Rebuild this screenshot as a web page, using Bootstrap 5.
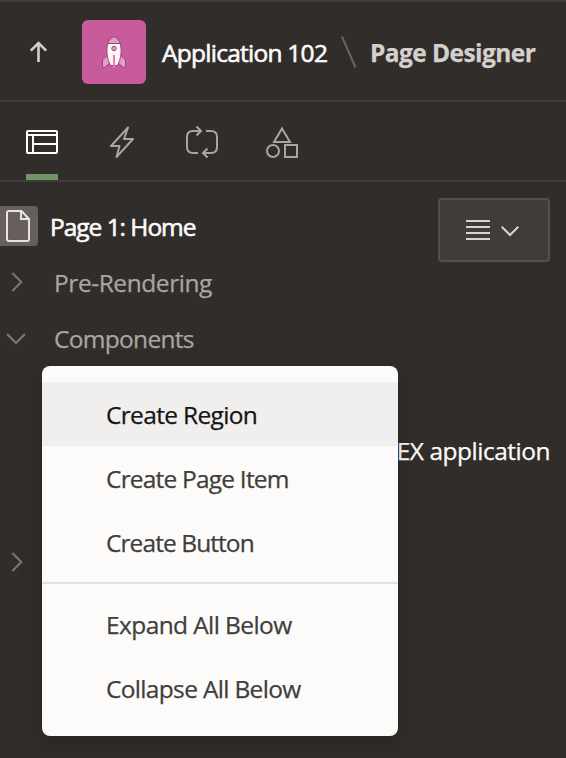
<!DOCTYPE html>
<html lang="en">
<head>
<meta charset="utf-8">
<meta name="viewport" content="width=device-width, initial-scale=1">
<title>Page Designer</title>
<link href="https://cdn.jsdelivr.net/npm/bootstrap@5.3.0/dist/css/bootstrap.min.css" rel="stylesheet">
<style>
body{background:#312d2a;color:#fcfbfa;font-family:"Open Sans","Noto Sans",sans-serif;font-size:24.5px;line-height:32px;height:758px;overflow:hidden;letter-spacing:-.7px;white-space:nowrap;-webkit-text-stroke:.25px currentColor}
svg{display:block;fill:none;flex:none}
.topbar{height:102px;border-top:2px solid #403c38;border-bottom:2px solid #403c38;padding:2px 0 0 22px}
.app-logo{width:64px;height:64px;background:#c75b9b;border-radius:6px;margin-left:28px;margin-right:16px}
.app-name{width:177px;padding-top:2px;letter-spacing:-.74px;-webkit-text-stroke-width:.6px}
.page-name{color:#d4d0cd;font-weight:700;margin-left:13px;padding-top:2px;letter-spacing:-.57px}
.tabs{height:80px;border-bottom:2px solid #403c38;padding-left:26px;gap:48px}
.tabs .nav-link{width:32px;height:78px;padding:22px 0 0;color:#aaa5a0;border-bottom:6px solid transparent}
.tabs .nav-link.active{color:#fff;border-bottom-color:#6f9468}
.tree{padding-top:16px}
.tree-row{height:56px}
.tree-row span{padding-top:2px}
.page-icon{width:38px;height:40px;background:#665f5b;border-radius:0 4px 4px 0;margin-right:12px}
.page-title{letter-spacing:-1.03px;-webkit-text-stroke-width:.6px}
.toggle{width:32px;margin-right:22px;color:#7b7571}
.muted-label{color:#aaa5a0}
.ls-a{letter-spacing:-.43px}
.ls-b{letter-spacing:-.49px}
.menu-btn{top:198px;left:438px;width:112px;height:64px;background:#403c38;border:2px solid #55504b;border-radius:4px;gap:11px;color:#d8d4d1}
.ctx{display:block;top:366px;left:42px;width:356px;height:370px;background:#fcfbfa;border:0;border-radius:8px;padding:16px 0;box-shadow:0 8px 24px rgba(0,0,0,.2);font-size:24.5px}
.ctx .dropdown-item{height:64px;padding:17px 0 0 64px;line-height:32px;color:#403e3c;letter-spacing:-.67px}
.ctx .dropdown-item.hot{background:#f0efee;color:#161513}
.ctx .page-item-entry{letter-spacing:-.8px}
.ctx .button-entry{letter-spacing:-.92px}
.ctx .expand-entry{letter-spacing:-.6px}
.ctx .dropdown-divider{margin:8px 0;border-top:2px solid #e3e2e0;opacity:1}
</style>
</head>
<body class="position-relative">
<header class="topbar d-flex align-items-center">
  <svg width="32" height="32" viewBox="0 0 32 32" stroke="#d4d0cd" stroke-width="2.6"><path d="M16.500 26V7.500M8.800 14.700l7.700-7.700 7.700 7.700"/></svg>
  <div class="app-logo d-flex align-items-center justify-content-center">
    <svg width="32" height="40" viewBox="0 0 32 40" stroke="#a3437b">
      <path d="M9.500 23L4.500 28v7.500h1.800L12 31zM22.500 23l5 5v7.500h-1.800L20 31z" fill="#e0a0c6"/>
      <path d="M9.700 11.500C8 19 9 27 12.500 33.500h7C23 27 24 19 22.300 11.500z" fill="#fcf6fa"/>
      <path d="M9.700 11.500C10.700 8.500 13 6 16 4.500c3 1.500 5.300 4 6.300 7z" fill="#e0a0c6"/>
      <circle cx="16" cy="16.500" r="2.200" fill="#e0a0c6"/>
      <path d="M16 23v13" stroke="#d583b3" stroke-width="2"/>
    </svg>
  </div>
  <span class="app-name">Application 102</span>
  <svg width="18" height="36" viewBox="0 0 18 36" stroke="#6b6560" stroke-width="2"><path d="M3 2.500L16.500 33.500"/></svg>
  <span class="page-name">Page Designer</span>
</header>
<nav class="nav tabs flex-nowrap">
  <a class="nav-link active" href="#" aria-label="Rendering"><svg width="32" height="36" viewBox="0 0 32 36" stroke="currentColor" stroke-width="2"><rect x="1" y="7" width="30" height="22" rx="1"/><path d="M1 11h30M7 11v18M7 20h24"/></svg></a>
  <a class="nav-link" href="#" aria-label="Dynamic Actions"><svg width="32" height="36" viewBox="0 0 32 36" stroke="currentColor" stroke-width="2" stroke-linejoin="round"><path d="M22 3.500L5 22h8.500l-3 11L27 15h-9z"/></svg></a>
  <a class="nav-link" href="#" aria-label="Processing"><svg width="32" height="36" viewBox="0 0 32 36" stroke="currentColor" stroke-width="2"><path d="M15 7H7q-6 0-6 6v10q0 6 6 6h5M20 7h5q6 0 6 6v10q0 6-6 6h-8M10.500 2.500L15 7l-4.500 4.500M21.500 24.500L17 29l4.500 4.500"/></svg></a>
  <a class="nav-link" href="#" aria-label="Page Shared Components"><svg width="32" height="36" viewBox="0 0 32 36" stroke="currentColor" stroke-width="2"><path d="M16 4.500l8 13.500H8z"/><circle cx="7" cy="27" r="6"/><rect x="19" y="21" width="12" height="12"/></svg></a>
</nav>
<main class="tree">
  <div class="tree-row d-flex align-items-center">
    <div class="page-icon"><svg width="38" height="40" viewBox="0 0 38 40" stroke="#e6e3e1" stroke-width="2"><path d="M7 7q0-2 2-2h12.500L29 13v20q0 2-2 2H9q-2 0-2-2zM21 5v8h8"/></svg></div>
    <span class="page-title">Page 1: Home</span>
  </div>
  <div class="tree-row d-flex align-items-center">
    <svg class="toggle" height="32" viewBox="0 0 32 32" stroke="currentColor" stroke-width="2.200"><path d="M12.300 7l9 9-9 9"/></svg>
    <span class="muted-label ls-a">Pre-Rendering</span>
  </div>
  <div class="tree-row d-flex align-items-center">
    <svg class="toggle" height="32" viewBox="0 0 32 32" stroke="currentColor" stroke-width="2.200"><path d="M7 12l9 9 9-9"/></svg>
    <span class="muted-label">Components</span>
  </div>
  <div class="tree-row"></div>
  <div class="tree-row d-flex align-items-center justify-content-end pe-3"><span class="ls-b">EX application</span></div>
  <div class="tree-row"></div>
  <div class="tree-row d-flex align-items-center">
    <svg class="toggle" height="32" viewBox="0 0 32 32" stroke="currentColor" stroke-width="2.200"><path d="M12.300 7l9 9-9 9"/></svg>
  </div>
</main>
<button class="btn menu-btn position-absolute d-flex align-items-center justify-content-center p-0 pe-1" aria-label="Page menu">
  <svg width="24" height="24" viewBox="0 0 24 24" stroke="currentColor" stroke-width="2"><path d="M0 3h24M0 9h24M0 15h24M0 21h24"/></svg>
  <svg width="18" height="20" viewBox="0 0 18 20" stroke="currentColor" stroke-width="2"><path d="M.7 6.700L9 15l8.300-8.300"/></svg>
</button>
<div class="dropdown-menu ctx">
  <a class="dropdown-item hot" href="#">Create Region</a>
  <a class="dropdown-item page-item-entry" href="#">Create Page Item</a>
  <a class="dropdown-item button-entry" href="#">Create Button</a>
  <hr class="dropdown-divider">
  <a class="dropdown-item expand-entry" href="#">Expand All Below</a>
  <a class="dropdown-item" href="#">Collapse All Below</a>
</div>
<script src="https://cdn.jsdelivr.net/npm/bootstrap@5.3.0/dist/js/bootstrap.bundle.min.js"></script>
</body>
</html>
